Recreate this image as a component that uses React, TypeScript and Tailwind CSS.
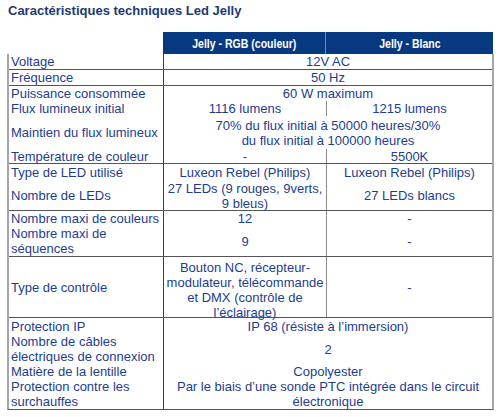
import React from 'react';

const font = { fontFamily: '"Liberation Sans", Arial, sans-serif' };

function Label({ children }: { children: React.ReactNode }) {
  return (
    <div className="w-[155px] shrink-0 border-r border-[#404040] pl-[2px] flex items-center">
      <div>{children}</div>
    </div>
  );
}

function Span({ children }: { children: React.ReactNode }) {
  return <div className="flex-1 flex items-center justify-center text-center"><div>{children}</div></div>;
}

function Two({ a, b }: { a: React.ReactNode; b: React.ReactNode }) {
  return (
    <>
      <div className="w-[163px] shrink-0 border-r border-[#8a8a8a] flex items-center justify-center text-center">
        <div>{a}</div>
      </div>
      <div className="flex-1 flex items-center justify-center text-center">
        <div>{b}</div>
      </div>
    </>
  );
}

export default function App() {
  return (
    <div className="w-[500px] h-[417px] bg-white text-[13px] leading-[15px] text-[#1c3d90]" style={font}>
      <div className="pl-[8px] pt-[3px] text-[13px] leading-[15px] font-bold text-[#1d3a72]">
        Caractéristiques techniques Led Jelly
      </div>
      <div className="ml-[163px] mt-[14px] w-[330px] h-[22px] bg-[#073981] flex text-white font-bold text-[13px] leading-[15px]">
        <div className="w-[163px] border-r border-[#6f8cc2] flex items-center justify-center">
          <span className="inline-block whitespace-nowrap scale-x-[0.81]">Jelly - RGB (couleur)</span>
        </div>
        <div className="flex-1 flex items-center justify-center">
          <span className="inline-block whitespace-nowrap scale-x-[0.81]">Jelly - Blanc</span>
        </div>
      </div>
      <div className="ml-[7px] w-[487px] border-l-2 border-r-2 border-b border-l-[#a6a6a6] border-r-[#a6a6a6] border-b-[#555]">
        <div className="flex h-[16px] border-b border-[#555]">
          <Label>Voltage</Label>
          <Span>12V AC</Span>
        </div>
        <div className="flex h-[16px] border-b border-[#555]">
          <Label>Fréquence</Label>
          <Span>50 Hz</Span>
        </div>
        <div className="flex flex-col border-b border-[#555]">
          <div className="flex h-[15px]">
            <Label>Puissance consommée</Label>
            <Span>60 W maximum</Span>
          </div>
          <div className="flex h-[15px]">
            <Label>Flux lumineux initial</Label>
            <Two a="1116 lumens" b="1215 lumens" />
          </div>
          <div className="flex h-[33px]">
            <Label>Maintien du flux lumineux</Label>
            <Span>70% du flux initial à 50000 heures/30%<br />du flux initial à 100000 heures</Span>
          </div>
          <div className="flex h-[14px]">
            <Label>Température de couleur</Label>
            <Two a="-" b="5500K" />
          </div>
        </div>
        <div className="flex flex-col border-b border-[#555]">
          <div className="flex h-[17px]">
            <Label>Type de LED utilisé</Label>
            <Two a="Luxeon Rebel (Philips)" b="Luxeon Rebel (Philips)" />
          </div>
          <div className="flex h-[29px]">
            <Label>Nombre de LEDs</Label>
            <Two a={<>27 LEDs (9 rouges, 9verts,<br />9 bleus)</>} b="27 LEDs blancs" />
          </div>
        </div>
        <div className="flex flex-col border-b border-[#555]">
          <div className="flex h-[15px]">
            <Label>Nombre maxi de couleurs</Label>
            <Two a="12" b="-" />
          </div>
          <div className="flex h-[30px]">
            <Label>Nombre maxi de<br />séquences</Label>
            <Two a="9" b="-" />
          </div>
        </div>
        <div className="flex h-[61px] border-b border-[#555]">
          <Label>Type de contrôle</Label>
          <div className="w-[163px] shrink-0 border-r border-[#8a8a8a] flex items-start justify-center text-center pt-[3px]">
            <div>Bouton NC, récepteur-<br />modulateur, télécommande<br />et DMX (contrôle de<br />l’éclairage)</div>
          </div>
          <div className="flex-1 flex items-center justify-center">-</div>
        </div>
        <div className="flex flex-col">
          <div className="flex h-[16px]">
            <Label>Protection IP</Label>
            <Span>IP 68 (résiste à l’immersion)</Span>
          </div>
          <div className="flex h-[30px]">
            <Label>Nombre de câbles<br />électriques de connexion</Label>
            <Span>2</Span>
          </div>
          <div className="flex h-[15px]">
            <Label>Matière de la lentille</Label>
            <Span>Copolyester</Span>
          </div>
          <div className="flex h-[30px]">
            <Label>Protection contre les<br />surchauffes</Label>
            <Span>Par le biais d’une sonde PTC intégrée dans le circuit<br />électronique</Span>
          </div>
        </div>
      </div>
    </div>
  );
}
